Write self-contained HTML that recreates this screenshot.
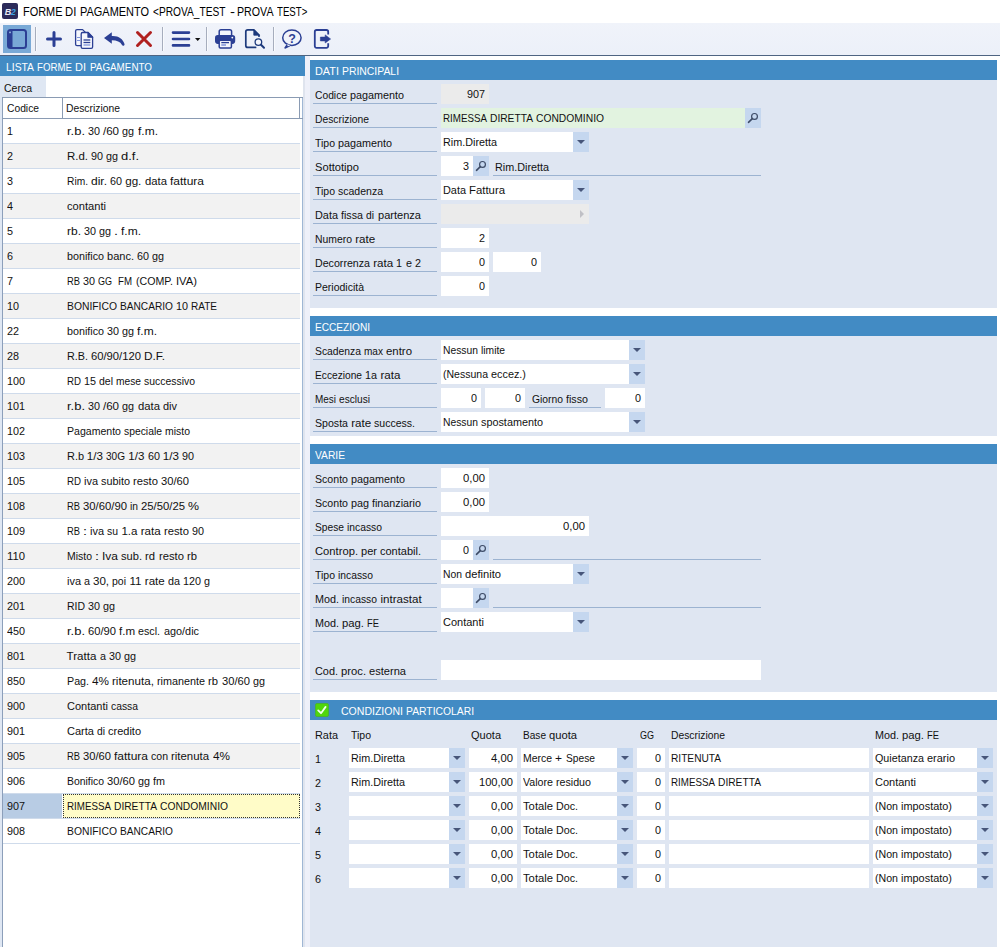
<!DOCTYPE html>
<html lang="it"><head><meta charset="utf-8"><title>FORME DI PAGAMENTO</title>
<style>
html,body{margin:0;padding:0}
body{width:1000px;height:947px;position:relative;overflow:hidden;background:#fff;font-family:"Liberation Sans",sans-serif;font-size:11.6px;color:#111}
.a{position:absolute;box-sizing:border-box;white-space:nowrap}
.t{font-size:11.6px;color:#111}
.w{display:inline-block;transform-origin:0 0;white-space:nowrap}
.ttl{color:#000}
.hd{height:20px;background:#428bc4;color:#fff;line-height:22px;font-size:11.6px}
.lbl{height:20px;line-height:21px;padding-left:2px;border-bottom:1px solid #9cb3d1}
.ul{height:20px;line-height:21px;padding-left:2px;border-bottom:1px solid #9cb3d1}
.inp{height:20px;line-height:19px;background:#fff}
.gray{background:#ebebeb}
.green{background:#e2f3e0}
.btn{width:16px;height:20px;background:#c5d7ef}
.arr{position:absolute;left:4px;top:8px;width:0;height:0;border-top:4px solid #47567a;border-left:4px solid transparent;border-right:4px solid transparent}
</style></head>
<body>
<div class="a" style="left:0;top:0;width:1000px;height:23px;background:#fff"></div>
<div class="a" style="left:2px;top:3px;width:16px;height:16px;background:#2c2b5a;border-radius:2px"></div>
<div class="a" style="left:3px;top:6px;width:14px;height:12px;font:italic bold 9px/12px 'Liberation Sans',sans-serif;color:#e8e8f4;letter-spacing:-0.5px;text-align:center">B<span style="color:#3aa0e0">2</span></div>
<div class="a ttl" style="left:23px;top:4px;width:300px;height:17px;line-height:17px;font-size:12.6px"><span class="a" style="left:0.3000000000000007px;top:0;transform-origin:0 0;transform:scaleX(0.868)">FORME </span><span class="a" style="left:42.3px;top:0;transform-origin:0 0;transform:scaleX(0.897)">DI </span><span class="a" style="left:56.5px;top:0;transform-origin:0 0;transform:scaleX(0.870)">PAGAMENTO </span><span class="a" style="left:130px;top:0;transform-origin:0 0;transform:scaleX(0.808)">&lt;PROVA_TEST </span><span class="a" style="left:206.6px;top:0;transform-origin:0 0;transform:scaleX(1.190)">- </span><span class="a" style="left:214.3px;top:0;transform-origin:0 0;transform:scaleX(0.846)">PROVA </span><span class="a" style="left:253.8px;top:0;transform-origin:0 0;transform:scaleX(0.766)">TEST&gt;</span></div>
<div class="a" style="left:0;top:23px;width:1000px;height:32px;background:linear-gradient(#f0f3fa,#ecf0f9)"></div>
<div class="a" style="left:0;top:55px;width:1000px;height:1px;background:#4e6482"></div>
<div class="a" style="left:3px;top:25px;width:28px;height:28px;background:#79a9d6"></div>
<svg class="a" style="left:0;top:23px" width="340" height="32" viewBox="0 23 340 32"><g fill="none" stroke="#2b3f94" stroke-linecap="round" stroke-linejoin="round">
<rect x="8" y="30" width="18" height="18" rx="2.5" stroke-width="2" fill="#79a9d6"/>
<path d="M8 32.5 a2.5 2.5 0 0 1 2.5 -2.5 H12.5 V48 H10.5 a2.5 2.5 0 0 1 -2.5 -2.5 Z" fill="#2b3f94" stroke="none"/>
<rect x="9.2" y="31.6" width="1.6" height="1.6" fill="#9fc0e4" stroke="none"/>
<path d="M54 32.5 V45.5 M47.5 39 H60.5" stroke-width="3"/>
<path d="M137.5 32.5 L150.5 45.5 M150.5 32.5 L137.5 45.5" stroke="#b0201f" stroke-width="3"/>
<path d="M173 32.6 H189 M173 39 H189 M173 45.4 H189" stroke-width="2.6"/>
</g>
<path d="M195 38 H200.4 L197.7 41 Z" fill="#111"/>
<g fill="#f4f6fc" stroke="#2b3f94" stroke-width="1.3" stroke-linejoin="round">
<path d="M84.8 45.6 H77 a1.4 1.4 0 0 1 -1.4 -1.4 V31 a1.4 1.4 0 0 1 1.4 -1.4 H82.6 L85.4 32.4 Z"/>
<path d="M81.2 33.9 a1.4 1.4 0 0 1 1.4 -1.4 H88 L92.6 37.2 V47 a1.4 1.4 0 0 1 -1.4 1.4 H82.6 a1.4 1.4 0 0 1 -1.4 -1.4 Z"/>
<path d="M88 32.5 V37.2 H92.6 Z" fill="#2b3f94"/>
</g>
<g stroke-width="1.3" fill="none">
<path d="M83.5 40 H90.3" stroke="#2b3f94"/><path d="M83.5 42.5 H90.3" stroke="#2b3f94"/><path d="M83.5 45 H90.3" stroke="#7f94dc"/>
<path d="M77 37.5 H80 M77 40.5 H80" stroke="#7f94dc" stroke-width="1.1"/>
</g>
<path d="M104 38 L111.8 32.2 V36 C118.5 35.6 122.8 38.8 124.5 44 a1.35 1.35 0 0 1 -2.5 1 C120.3 41.8 117 40.3 111.8 40.3 V43.8 Z" fill="#2b3f94"/>
<g>
<rect x="219.2" y="29.8" width="12.4" height="8" rx="1.8" fill="#f4f6fc" stroke="#2b3f94" stroke-width="1.5"/>
<rect x="215" y="34.9" width="20.2" height="9" rx="2.8" fill="#2b3f94"/>
<rect x="219.2" y="40.2" width="12.2" height="7.8" rx="1.2" fill="#f4f6fc" stroke="#2b3f94" stroke-width="1.5"/>
<path d="M221.3 42.6 H229" stroke="#2b3f94" stroke-width="1.3"/><path d="M221.3 45 H226" stroke="#6f84d4" stroke-width="1.3"/>
<circle cx="232.3" cy="37.6" r="0.9" fill="#fff"/>
</g>
<g fill="none" stroke="#1d3a7c" stroke-linecap="round" stroke-linejoin="round">
<path d="M259 36.2 V35 L253.8 29.8 H247.8 a2 2 0 0 0 -2 2 V45.4 a2 2 0 0 0 2 2 H255.6" stroke-width="1.7"/>
<path d="M253.8 30 V35.2 H259 Z" fill="#1d3a7c" stroke-width="0.8"/>
<circle cx="258.4" cy="42.1" r="3.3" stroke-width="1.3" fill="#f4f6fc"/>
<path d="M261 44.8 L264 47.8" stroke-width="2"/>
</g>
<g fill="none" stroke="#2b3f94" stroke-linejoin="round">
<path d="M287.2 44.6 L285 48 L290 45.6" stroke-width="1.4" fill="#f0f3fa"/>
<ellipse cx="291.9" cy="37.7" rx="9.2" ry="7.7" stroke-width="1.5" fill="#f0f3fa"/>
<path d="M286.6 44.2 L288.6 46.2 L290.2 45 Z" fill="#f0f3fa" stroke="none"/>
</g>
<text x="292" y="42.6" text-anchor="middle" font-family="Liberation Sans, sans-serif" font-weight="bold" font-size="12.5" fill="#2b3f94">?</text>
<g fill="none" stroke="#2b3f94" stroke-linecap="butt" stroke-linejoin="round">
<path d="M328.2 34.6 V31.8 a1.8 1.8 0 0 0 -1.8 -1.8 H316.6 a1.8 1.8 0 0 0 -1.8 1.8 V46 a1.8 1.8 0 0 0 1.8 1.8 H326.4 a1.8 1.8 0 0 0 1.8 -1.8 V43.2" stroke-width="1.8"/>
<path d="M320.4 37.1 H325.2 V34.9 L330.6 39 L325.2 43 V40.9 H320.4 Z" fill="#2b3f94" stroke-width="0.6"/>
</g>
<g>
<rect x="35" y="27" width="1" height="24" fill="#a6adbd"/><rect x="36" y="27" width="1" height="24" fill="#f8fafd"/>
<rect x="162" y="27" width="1" height="24" fill="#a6adbd"/><rect x="163" y="27" width="1" height="24" fill="#f8fafd"/>
<rect x="206" y="27" width="1" height="24" fill="#a6adbd"/><rect x="207" y="27" width="1" height="24" fill="#f8fafd"/>
<rect x="273" y="27" width="1" height="24" fill="#a6adbd"/><rect x="274" y="27" width="1" height="24" fill="#f8fafd"/>
</g>
</svg>
<div class="a" style="left:0;top:56px;width:310px;height:891px;background:#eef0f9"></div>
<div class="a" style="left:0;top:56px;width:305px;height:891px;background:#fff"></div>
<div class="a" style="left:303px;top:76px;width:2px;height:871px;background:#dfe4ee"></div>
<div class="a hd" style="left:0px;top:56px;width:305px;padding-left:6px"><span class="w" style="width:28px;transform:scaleX(0.893)">LISTA</span> <span class="w" style="width:35px;transform:scaleX(0.836)">FORME</span> <span class="w" style="width:11px;transform:scaleX(0.949)">DI</span> <span class="w" style="width:62px;transform:scaleX(0.849)">PAGAMENTO</span></div>
<div class="a" style="left:0;top:76px;width:46px;height:21px;background:#dfe7f3"></div>
<div class="a t" style="left:4.4px;top:78px;line-height:20px;white-space:pre"><span class="w" style="width:28px;transform:scaleX(0.905)">Cerca</span></div>
<div class="a" style="left:0;top:76px;width:2px;height:871px;background:#dfe7f3"></div>
<div class="a" style="left:2px;top:97px;width:1px;height:850px;background:#8c9fba"></div>
<div class="a" style="left:302px;top:97px;width:1px;height:850px;background:#9fb6d4"></div>
<div class="a" style="left:2px;top:97px;width:301px;height:1px;background:#8a9bb3"></div>
<div class="a" style="left:2px;top:118px;width:301px;height:1px;background:#8a9bb3"></div>
<div class="a" style="left:62px;top:98px;width:1px;height:20px;background:#8a9bb3"></div>
<div class="a" style="left:299px;top:98px;width:1px;height:20px;background:#8a9bb3"></div>
<div class="a t" style="left:7px;top:98px;line-height:20px;white-space:pre"><span class="w" style="width:32px;transform:scaleX(0.887)">Codice</span></div>
<div class="a t" style="left:66px;top:98px;line-height:20px;white-space:pre"><span class="w" style="width:54px;transform:scaleX(0.891)">Descrizione</span></div>
<div class="a" style="left:3px;top:119px;width:297px;height:24px;background:#fff"></div>
<div class="a" style="left:3px;top:143px;width:297px;height:1px;background:#cfdbeb"></div>
<div class="a t" style="left:7px;top:119px;line-height:24px;white-space:pre"><span class="w" style="width:6px;transform:scaleX(0.930)">1</span></div>
<div class="a t" style="left:66.5px;top:119px;line-height:24px;white-space:pre"><span class="w" style="width:18px;transform:scaleX(1.116)">r.b.</span> <span class="w" style="width:12px;transform:scaleX(0.930)">30</span> /60 <span class="w" style="width:12px;transform:scaleX(0.930)">gg</span> <span class="w" style="width:20px;transform:scaleX(1.035)">f.m.</span></div>
<div class="a" style="left:3px;top:144px;width:297px;height:24px;background:#f2f2f2"></div>
<div class="a" style="left:3px;top:168px;width:297px;height:1px;background:#cfdbeb"></div>
<div class="a t" style="left:7px;top:144px;line-height:24px;white-space:pre"><span class="w" style="width:6px;transform:scaleX(0.930)">2</span></div>
<div class="a t" style="left:66.5px;top:144px;line-height:24px;white-space:pre"><span class="w" style="width:21px;transform:scaleX(0.988)">R.d.</span> <span class="w" style="width:12px;transform:scaleX(0.930)">90</span> <span class="w" style="width:12px;transform:scaleX(0.930)">gg</span> <span class="w" style="width:18px;transform:scaleX(1.116)">d.f.</span></div>
<div class="a" style="left:3px;top:169px;width:297px;height:24px;background:#fff"></div>
<div class="a" style="left:3px;top:193px;width:297px;height:1px;background:#cfdbeb"></div>
<div class="a t" style="left:7px;top:169px;line-height:24px;white-space:pre"><span class="w" style="width:6px;transform:scaleX(0.930)">3</span></div>
<div class="a t" style="left:66.5px;top:169px;line-height:24px;white-space:pre"><span class="w" style="width:21px;transform:scaleX(0.881)">Rim.</span> <span class="w" style="width:16px;transform:scaleX(1.034)">dir.</span> <span class="w" style="width:12px;transform:scaleX(0.930)">60</span> gg. <span class="w" style="width:22px;transform:scaleX(0.974)">data</span> <span class="w" style="width:34px;transform:scaleX(1.034)">fattura</span></div>
<div class="a" style="left:3px;top:194px;width:297px;height:24px;background:#f2f2f2"></div>
<div class="a" style="left:3px;top:218px;width:297px;height:1px;background:#cfdbeb"></div>
<div class="a t" style="left:7px;top:194px;line-height:24px;white-space:pre"><span class="w" style="width:6px;transform:scaleX(0.930)">4</span></div>
<div class="a t" style="left:66.5px;top:194px;line-height:24px;white-space:pre"><span class="w" style="width:39px;transform:scaleX(0.960)">contanti</span></div>
<div class="a" style="left:3px;top:219px;width:297px;height:24px;background:#fff"></div>
<div class="a" style="left:3px;top:243px;width:297px;height:1px;background:#cfdbeb"></div>
<div class="a t" style="left:7px;top:219px;line-height:24px;white-space:pre"><span class="w" style="width:6px;transform:scaleX(0.930)">5</span></div>
<div class="a t" style="left:66.5px;top:219px;line-height:24px;white-space:pre"><span class="w" style="width:14px;transform:scaleX(1.035)">rb.</span> <span class="w" style="width:12px;transform:scaleX(0.930)">30</span> <span class="w" style="width:12px;transform:scaleX(0.930)">gg</span> <span class="w" style="width:4px;transform:scaleX(1.237)">.</span> <span class="w" style="width:20px;transform:scaleX(1.035)">f.m.</span></div>
<div class="a" style="left:3px;top:244px;width:297px;height:24px;background:#f2f2f2"></div>
<div class="a" style="left:3px;top:268px;width:297px;height:1px;background:#cfdbeb"></div>
<div class="a t" style="left:7px;top:244px;line-height:24px;white-space:pre"><span class="w" style="width:6px;transform:scaleX(0.930)">6</span></div>
<div class="a t" style="left:66.5px;top:244px;line-height:24px;white-space:pre"><span class="w" style="width:37px;transform:scaleX(0.926)">bonifico</span> <span class="w" style="width:27px;transform:scaleX(0.952)">banc.</span> <span class="w" style="width:12px;transform:scaleX(0.930)">60</span> <span class="w" style="width:12px;transform:scaleX(0.930)">gg</span></div>
<div class="a" style="left:3px;top:269px;width:297px;height:24px;background:#fff"></div>
<div class="a" style="left:3px;top:293px;width:297px;height:1px;background:#cfdbeb"></div>
<div class="a t" style="left:7px;top:269px;line-height:24px;white-space:pre"><span class="w" style="width:6px;transform:scaleX(0.930)">7</span></div>
<div class="a t" style="left:66.5px;top:269px;line-height:24px;white-space:pre"><span class="w" style="width:13px;transform:scaleX(0.807)">RB</span> <span class="w" style="width:12px;transform:scaleX(0.930)">30</span> <span class="w" style="width:14px;transform:scaleX(0.776)">GG</span>  <span class="w" style="width:14px;transform:scaleX(0.836)">FM</span> <span class="w" style="width:37px;transform:scaleX(0.916)">(COMP.</span> <span class="w" style="width:21px;transform:scaleX(0.968)">IVA)</span></div>
<div class="a" style="left:3px;top:294px;width:297px;height:24px;background:#f2f2f2"></div>
<div class="a" style="left:3px;top:318px;width:297px;height:1px;background:#cfdbeb"></div>
<div class="a t" style="left:7px;top:294px;line-height:24px;white-space:pre"><span class="w" style="width:12px;transform:scaleX(0.930)">10</span></div>
<div class="a t" style="left:66.5px;top:294px;line-height:24px;white-space:pre"><span class="w" style="width:50px;transform:scaleX(0.892)">BONIFICO</span> <span class="w" style="width:53px;transform:scaleX(0.875)">BANCARIO</span> <span class="w" style="width:12px;transform:scaleX(0.930)">10</span> <span class="w" style="width:26px;transform:scaleX(0.865)">RATE</span></div>
<div class="a" style="left:3px;top:319px;width:297px;height:24px;background:#fff"></div>
<div class="a" style="left:3px;top:343px;width:297px;height:1px;background:#cfdbeb"></div>
<div class="a t" style="left:7px;top:319px;line-height:24px;white-space:pre"><span class="w" style="width:12px;transform:scaleX(0.930)">22</span></div>
<div class="a t" style="left:66.5px;top:319px;line-height:24px;white-space:pre"><span class="w" style="width:37px;transform:scaleX(0.926)">bonifico</span> <span class="w" style="width:12px;transform:scaleX(0.930)">30</span> <span class="w" style="width:12px;transform:scaleX(0.930)">gg</span> <span class="w" style="width:20px;transform:scaleX(1.035)">f.m.</span></div>
<div class="a" style="left:3px;top:344px;width:297px;height:24px;background:#f2f2f2"></div>
<div class="a" style="left:3px;top:368px;width:297px;height:1px;background:#cfdbeb"></div>
<div class="a t" style="left:7px;top:344px;line-height:24px;white-space:pre"><span class="w" style="width:12px;transform:scaleX(0.930)">28</span></div>
<div class="a t" style="left:66.5px;top:344px;line-height:24px;white-space:pre"><span class="w" style="width:21px;transform:scaleX(0.931)">R.B.</span> <span class="w" style="width:50px;transform:scaleX(0.969)">60/90/120</span> <span class="w" style="width:21px;transform:scaleX(1.018)">D.F.</span></div>
<div class="a" style="left:3px;top:369px;width:297px;height:24px;background:#fff"></div>
<div class="a" style="left:3px;top:393px;width:297px;height:1px;background:#cfdbeb"></div>
<div class="a t" style="left:7px;top:369px;line-height:24px;white-space:pre"><span class="w" style="width:18px;transform:scaleX(0.931)">100</span></div>
<div class="a t" style="left:66.5px;top:369px;line-height:24px;white-space:pre"><span class="w" style="width:14px;transform:scaleX(0.836)">RD</span> <span class="w" style="width:12px;transform:scaleX(0.930)">15</span> <span class="w" style="width:14px;transform:scaleX(0.904)">del</span> <span class="w" style="width:25px;transform:scaleX(0.882)">mese</span> <span class="w" style="width:51px;transform:scaleX(0.899)">successivo</span></div>
<div class="a" style="left:3px;top:394px;width:297px;height:24px;background:#f2f2f2"></div>
<div class="a" style="left:3px;top:418px;width:297px;height:1px;background:#cfdbeb"></div>
<div class="a t" style="left:7px;top:394px;line-height:24px;white-space:pre"><span class="w" style="width:18px;transform:scaleX(0.931)">101</span></div>
<div class="a t" style="left:66.5px;top:394px;line-height:24px;white-space:pre"><span class="w" style="width:18px;transform:scaleX(1.116)">r.b.</span> <span class="w" style="width:12px;transform:scaleX(0.930)">30</span> /60 <span class="w" style="width:12px;transform:scaleX(0.930)">gg</span> <span class="w" style="width:22px;transform:scaleX(0.974)">data</span> <span class="w" style="width:14px;transform:scaleX(0.944)">div</span></div>
<div class="a" style="left:3px;top:419px;width:297px;height:24px;background:#fff"></div>
<div class="a" style="left:3px;top:443px;width:297px;height:1px;background:#cfdbeb"></div>
<div class="a t" style="left:7px;top:419px;line-height:24px;white-space:pre"><span class="w" style="width:18px;transform:scaleX(0.931)">102</span></div>
<div class="a t" style="left:66.5px;top:419px;line-height:24px;white-space:pre"><span class="w" style="width:54px;transform:scaleX(0.910)">Pagamento</span> <span class="w" style="width:38px;transform:scaleX(0.893)">speciale</span> <span class="w" style="width:25px;transform:scaleX(0.902)">misto</span></div>
<div class="a" style="left:3px;top:444px;width:297px;height:24px;background:#f2f2f2"></div>
<div class="a" style="left:3px;top:468px;width:297px;height:1px;background:#cfdbeb"></div>
<div class="a t" style="left:7px;top:444px;line-height:24px;white-space:pre"><span class="w" style="width:18px;transform:scaleX(0.931)">103</span></div>
<div class="a t" style="left:66.5px;top:444px;line-height:24px;white-space:pre"><span class="w" style="width:17px;transform:scaleX(0.942)">R.b</span> 1/3 <span class="w" style="width:19px;transform:scaleX(0.867)">30G</span> 1/3 <span class="w" style="width:12px;transform:scaleX(0.930)">60</span> 1/3 <span class="w" style="width:12px;transform:scaleX(0.930)">90</span></div>
<div class="a" style="left:3px;top:469px;width:297px;height:24px;background:#fff"></div>
<div class="a" style="left:3px;top:493px;width:297px;height:1px;background:#cfdbeb"></div>
<div class="a t" style="left:7px;top:469px;line-height:24px;white-space:pre"><span class="w" style="width:18px;transform:scaleX(0.931)">105</span></div>
<div class="a t" style="left:66.5px;top:469px;line-height:24px;white-space:pre"><span class="w" style="width:14px;transform:scaleX(0.836)">RD</span> <span class="w" style="width:14px;transform:scaleX(0.944)">iva</span> <span class="w" style="width:29px;transform:scaleX(0.937)">subito</span> <span class="w" style="width:25px;transform:scaleX(0.970)">resto</span> <span class="w" style="width:28px;transform:scaleX(0.965)">30/60</span></div>
<div class="a" style="left:3px;top:494px;width:297px;height:24px;background:#f2f2f2"></div>
<div class="a" style="left:3px;top:518px;width:297px;height:1px;background:#cfdbeb"></div>
<div class="a t" style="left:7px;top:494px;line-height:24px;white-space:pre"><span class="w" style="width:18px;transform:scaleX(0.931)">108</span></div>
<div class="a t" style="left:66.5px;top:494px;line-height:24px;white-space:pre"><span class="w" style="width:13px;transform:scaleX(0.807)">RB</span> <span class="w" style="width:44px;transform:scaleX(0.975)">30/60/90</span> <span class="w" style="width:8px;transform:scaleX(0.886)">in</span> <span class="w" style="width:44px;transform:scaleX(0.975)">25/50/25</span> <span class="w" style="width:11px;transform:scaleX(1.067)">%</span></div>
<div class="a" style="left:3px;top:519px;width:297px;height:24px;background:#fff"></div>
<div class="a" style="left:3px;top:543px;width:297px;height:1px;background:#cfdbeb"></div>
<div class="a t" style="left:7px;top:519px;line-height:24px;white-space:pre"><span class="w" style="width:18px;transform:scaleX(0.931)">109</span></div>
<div class="a t" style="left:66.5px;top:519px;line-height:24px;white-space:pre"><span class="w" style="width:13px;transform:scaleX(0.807)">RB</span> <span class="w" style="width:4px;transform:scaleX(1.237)">:</span> <span class="w" style="width:14px;transform:scaleX(0.944)">iva</span> <span class="w" style="width:11px;transform:scaleX(0.898)">su</span> 1.a rata <span class="w" style="width:25px;transform:scaleX(0.970)">resto</span> <span class="w" style="width:12px;transform:scaleX(0.930)">90</span></div>
<div class="a" style="left:3px;top:544px;width:297px;height:24px;background:#f2f2f2"></div>
<div class="a" style="left:3px;top:568px;width:297px;height:1px;background:#cfdbeb"></div>
<div class="a t" style="left:7px;top:544px;line-height:24px;white-space:pre"><span class="w" style="width:18px;transform:scaleX(0.974)">110</span></div>
<div class="a t" style="left:66.5px;top:544px;line-height:24px;white-space:pre"><span class="w" style="width:25px;transform:scaleX(0.902)">Misto</span> <span class="w" style="width:4px;transform:scaleX(1.237)">:</span> <span class="w" style="width:16px;transform:scaleX(1.034)">Iva</span> <span class="w" style="width:21px;transform:scaleX(0.958)">sub.</span> <span class="w" style="width:10px;transform:scaleX(0.970)">rd</span> <span class="w" style="width:25px;transform:scaleX(0.970)">resto</span> <span class="w" style="width:10px;transform:scaleX(0.970)">rb</span></div>
<div class="a" style="left:3px;top:569px;width:297px;height:24px;background:#fff"></div>
<div class="a" style="left:3px;top:593px;width:297px;height:1px;background:#cfdbeb"></div>
<div class="a t" style="left:7px;top:569px;line-height:24px;white-space:pre"><span class="w" style="width:18px;transform:scaleX(0.931)">200</span></div>
<div class="a t" style="left:66.5px;top:569px;line-height:24px;white-space:pre"><span class="w" style="width:14px;transform:scaleX(0.944)">iva</span> <span class="w" style="width:6px;transform:scaleX(0.930)">a</span> 30, <span class="w" style="width:14px;transform:scaleX(0.904)">poi</span> 11 rate <span class="w" style="width:12px;transform:scaleX(0.930)">da</span> <span class="w" style="width:18px;transform:scaleX(0.931)">120</span> <span class="w" style="width:6px;transform:scaleX(0.930)">g</span></div>
<div class="a" style="left:3px;top:594px;width:297px;height:24px;background:#f2f2f2"></div>
<div class="a" style="left:3px;top:618px;width:297px;height:1px;background:#cfdbeb"></div>
<div class="a t" style="left:7px;top:594px;line-height:24px;white-space:pre"><span class="w" style="width:18px;transform:scaleX(0.931)">201</span></div>
<div class="a t" style="left:66.5px;top:594px;line-height:24px;white-space:pre"><span class="w" style="width:18px;transform:scaleX(0.901)">RID</span> <span class="w" style="width:12px;transform:scaleX(0.930)">30</span> <span class="w" style="width:12px;transform:scaleX(0.930)">gg</span></div>
<div class="a" style="left:3px;top:619px;width:297px;height:24px;background:#fff"></div>
<div class="a" style="left:3px;top:643px;width:297px;height:1px;background:#cfdbeb"></div>
<div class="a t" style="left:7px;top:619px;line-height:24px;white-space:pre"><span class="w" style="width:18px;transform:scaleX(0.931)">450</span></div>
<div class="a t" style="left:66.5px;top:619px;line-height:24px;white-space:pre"><span class="w" style="width:18px;transform:scaleX(1.116)">r.b.</span> <span class="w" style="width:28px;transform:scaleX(0.965)">60/90</span> f.m <span class="w" style="width:22px;transform:scaleX(0.923)">escl.</span> <span class="w" style="width:35px;transform:scaleX(0.936)">ago/dic</span></div>
<div class="a" style="left:3px;top:644px;width:297px;height:24px;background:#f2f2f2"></div>
<div class="a" style="left:3px;top:668px;width:297px;height:1px;background:#cfdbeb"></div>
<div class="a t" style="left:7px;top:644px;line-height:24px;white-space:pre"><span class="w" style="width:18px;transform:scaleX(0.931)">801</span></div>
<div class="a t" style="left:66.5px;top:644px;line-height:24px;white-space:pre">Tratta <span class="w" style="width:6px;transform:scaleX(0.930)">a</span> <span class="w" style="width:12px;transform:scaleX(0.930)">30</span> <span class="w" style="width:12px;transform:scaleX(0.930)">gg</span></div>
<div class="a" style="left:3px;top:669px;width:297px;height:24px;background:#fff"></div>
<div class="a" style="left:3px;top:693px;width:297px;height:1px;background:#cfdbeb"></div>
<div class="a t" style="left:7px;top:669px;line-height:24px;white-space:pre"><span class="w" style="width:18px;transform:scaleX(0.931)">850</span></div>
<div class="a t" style="left:66.5px;top:669px;line-height:24px;white-space:pre"><span class="w" style="width:22px;transform:scaleX(0.922)">Pag.</span> <span class="w" style="width:17px;transform:scaleX(1.014)">4%</span> ritenuta, <span class="w" style="width:48px;transform:scaleX(0.931)">rimanente</span> <span class="w" style="width:10px;transform:scaleX(0.970)">rb</span> <span class="w" style="width:28px;transform:scaleX(0.965)">30/60</span> <span class="w" style="width:12px;transform:scaleX(0.930)">gg</span></div>
<div class="a" style="left:3px;top:694px;width:297px;height:24px;background:#f2f2f2"></div>
<div class="a" style="left:3px;top:718px;width:297px;height:1px;background:#cfdbeb"></div>
<div class="a t" style="left:7px;top:694px;line-height:24px;white-space:pre"><span class="w" style="width:18px;transform:scaleX(0.931)">900</span></div>
<div class="a t" style="left:66.5px;top:694px;line-height:24px;white-space:pre"><span class="w" style="width:41px;transform:scaleX(0.949)">Contanti</span> <span class="w" style="width:27px;transform:scaleX(0.891)">cassa</span></div>
<div class="a" style="left:3px;top:719px;width:297px;height:24px;background:#fff"></div>
<div class="a" style="left:3px;top:743px;width:297px;height:1px;background:#cfdbeb"></div>
<div class="a t" style="left:7px;top:719px;line-height:24px;white-space:pre"><span class="w" style="width:18px;transform:scaleX(0.931)">901</span></div>
<div class="a t" style="left:66.5px;top:719px;line-height:24px;white-space:pre"><span class="w" style="width:27px;transform:scaleX(0.952)">Carta</span> <span class="w" style="width:8px;transform:scaleX(0.886)">di</span> <span class="w" style="width:33px;transform:scaleX(0.948)">credito</span></div>
<div class="a" style="left:3px;top:744px;width:297px;height:24px;background:#f2f2f2"></div>
<div class="a" style="left:3px;top:768px;width:297px;height:1px;background:#cfdbeb"></div>
<div class="a t" style="left:7px;top:744px;line-height:24px;white-space:pre"><span class="w" style="width:18px;transform:scaleX(0.931)">905</span></div>
<div class="a t" style="left:66.5px;top:744px;line-height:24px;white-space:pre"><span class="w" style="width:13px;transform:scaleX(0.807)">RB</span> <span class="w" style="width:28px;transform:scaleX(0.965)">30/60</span> <span class="w" style="width:34px;transform:scaleX(1.034)">fattura</span> <span class="w" style="width:17px;transform:scaleX(0.909)">con</span> <span class="w" style="width:38px;transform:scaleX(0.983)">ritenuta</span> <span class="w" style="width:17px;transform:scaleX(1.014)">4%</span></div>
<div class="a" style="left:3px;top:769px;width:297px;height:24px;background:#fff"></div>
<div class="a" style="left:3px;top:793px;width:297px;height:1px;background:#cfdbeb"></div>
<div class="a t" style="left:7px;top:769px;line-height:24px;white-space:pre"><span class="w" style="width:18px;transform:scaleX(0.931)">906</span></div>
<div class="a t" style="left:66.5px;top:769px;line-height:24px;white-space:pre"><span class="w" style="width:37px;transform:scaleX(0.897)">Bonifico</span> <span class="w" style="width:28px;transform:scaleX(0.965)">30/60</span> <span class="w" style="width:12px;transform:scaleX(0.930)">gg</span> <span class="w" style="width:12px;transform:scaleX(0.931)">fm</span></div>
<div class="a" style="left:3px;top:794px;width:59px;height:24px;background:#b8cce4"></div>
<div class="a" style="left:63px;top:794px;width:237px;height:24px;background:#fffcc8;border:1px dotted #333"></div>
<div class="a" style="left:3px;top:818px;width:297px;height:1px;background:#cfdbeb"></div>
<div class="a t" style="left:7px;top:794px;line-height:24px;white-space:pre"><span class="w" style="width:18px;transform:scaleX(0.931)">907</span></div>
<div class="a t" style="left:66.5px;top:794px;line-height:24px;white-space:pre"><span class="w" style="width:44px;transform:scaleX(0.843)">RIMESSA</span> <span class="w" style="width:43px;transform:scaleX(0.882)">DIRETTA</span> <span class="w" style="width:68px;transform:scaleX(0.887)">CONDOMINIO</span></div>
<div class="a" style="left:3px;top:819px;width:297px;height:24px;background:#fff"></div>
<div class="a" style="left:3px;top:843px;width:297px;height:1px;background:#cfdbeb"></div>
<div class="a t" style="left:7px;top:819px;line-height:24px;white-space:pre"><span class="w" style="width:18px;transform:scaleX(0.931)">908</span></div>
<div class="a t" style="left:66.5px;top:819px;line-height:24px;white-space:pre"><span class="w" style="width:50px;transform:scaleX(0.892)">BONIFICO</span> <span class="w" style="width:53px;transform:scaleX(0.875)">BANCARIO</span></div>
<div class="a" style="left:310px;top:56px;width:690px;height:891px;background:#fff"></div>
<div class="a hd" style="left:310px;top:60px;width:687px;padding-left:5px"><span class="w" style="width:24px;transform:scaleX(0.939)">DATI</span> <span class="w" style="width:57px;transform:scaleX(0.897)">PRINCIPALI</span></div>
<div class="a" style="left:310px;top:80px;width:687px;height:228px;background:#dfe6f2"></div>
<div class="a hd" style="left:310px;top:316px;width:687px;padding-left:5px"><span class="w" style="width:55px;transform:scaleX(0.871)">ECCEZIONI</span></div>
<div class="a" style="left:310px;top:336px;width:687px;height:100px;background:#dfe6f2"></div>
<div class="a hd" style="left:310px;top:444px;width:687px;padding-left:5px"><span class="w" style="width:30px;transform:scaleX(0.884)">VARIE</span></div>
<div class="a" style="left:310px;top:464px;width:687px;height:228px;background:#dfe6f2"></div>
<div class="a hd" style="left:310px;top:700px;width:687px;padding-left:31px"><span class="w" style="width:62px;transform:scaleX(0.908)">CONDIZIONI</span> <span class="w" style="width:68px;transform:scaleX(0.892)">PARTICOLARI</span></div>
<div class="a" style="left:310px;top:720px;width:687px;height:227px;background:#dfe6f2"></div>
<div class="a" style="left:315px;top:703px;width:14px;height:14px;background:#50d60c;border:1px solid #47b238;border-radius:2px"></div>
<svg class="a" style="left:315px;top:703px" width="14" height="14" viewBox="0 0 14 14"><path d="M3.2 7.4 L6 10.2 L10.6 3.9" fill="none" stroke="#efffec" stroke-width="1.8" stroke-linecap="round" stroke-linejoin="round"/></svg>
<div class="a lbl" style="left:313px;top:84px;width:124px;padding-left:2px"><span class="w" style="width:32px;transform:scaleX(0.887)">Codice</span> <span class="w" style="width:54px;transform:scaleX(0.931)">pagamento</span></div>
<div class="a lbl" style="left:313px;top:108px;width:124px;padding-left:2px"><span class="w" style="width:54px;transform:scaleX(0.891)">Descrizione</span></div>
<div class="a lbl" style="left:313px;top:132px;width:124px;padding-left:2px"><span class="w" style="width:20px;transform:scaleX(0.904)">Tipo</span> <span class="w" style="width:54px;transform:scaleX(0.931)">pagamento</span></div>
<div class="a lbl" style="left:313px;top:156px;width:124px;padding-left:2px"><span class="w" style="width:44px;transform:scaleX(0.961)">Sottotipo</span></div>
<div class="a lbl" style="left:313px;top:180px;width:124px;padding-left:2px"><span class="w" style="width:20px;transform:scaleX(0.904)">Tipo</span> <span class="w" style="width:45px;transform:scaleX(0.907)">scadenza</span></div>
<div class="a lbl" style="left:313px;top:204px;width:124px;padding-left:2px"><span class="w" style="width:23px;transform:scaleX(0.939)">Data</span> <span class="w" style="width:22px;transform:scaleX(0.923)">fissa</span> <span class="w" style="width:8px;transform:scaleX(0.886)">di</span> <span class="w" style="width:43px;transform:scaleX(0.953)">partenza</span></div>
<div class="a lbl" style="left:313px;top:228px;width:124px;padding-left:2px"><span class="w" style="width:37px;transform:scaleX(0.897)">Numero</span> rate</div>
<div class="a lbl" style="left:313px;top:252px;width:124px;padding-left:2px"><span class="w" style="width:55px;transform:scaleX(0.918)">Decorrenza</span> rata <span class="w" style="width:6px;transform:scaleX(0.930)">1</span> <span class="w" style="width:6px;transform:scaleX(0.930)">e</span> <span class="w" style="width:6px;transform:scaleX(0.930)">2</span></div>
<div class="a lbl" style="left:313px;top:276px;width:124px;padding-left:2px"><span class="w" style="width:49px;transform:scaleX(0.905)">Periodicità</span></div>
<div class="a inp gray" style="left:441px;top:84px;width:48px;text-align:right;padding-right:3.7px"><span class="w" style="width:18px;transform:scaleX(0.931)">907</span></div>
<div class="a inp green" style="left:441px;top:108px;width:304px;text-align:left;padding-left:2px"><span class="w" style="width:44px;transform:scaleX(0.843)">RIMESSA</span> <span class="w" style="width:43px;transform:scaleX(0.882)">DIRETTA</span> <span class="w" style="width:68px;transform:scaleX(0.887)">CONDOMINIO</span></div>
<div class="a btn" style="left:745px;top:108px"><svg width="16" height="20" viewBox="0 0 16 20"><circle cx="9.5" cy="8.4" r="2.9" fill="none" stroke="#3d4b66" stroke-width="1.2"/><path d="M7.3 10.7 L3.5 14.3" stroke="#3d4b66" stroke-width="1.6" stroke-linecap="round"/></svg></div>
<div class="a inp" style="left:441px;top:132px;width:132px;padding-left:2.2px"><span class="w" style="width:54px;transform:scaleX(0.931)">Rim.Diretta</span></div>
<div class="a btn" style="left:573px;top:132px"><i class="arr"></i></div>
<div class="a inp " style="left:441px;top:156px;width:32px;text-align:right;padding-right:3.7px"><span class="w" style="width:6px;transform:scaleX(0.930)">3</span></div>
<div class="a btn" style="left:473px;top:156px"><svg width="16" height="20" viewBox="0 0 16 20"><circle cx="9.5" cy="8.4" r="2.9" fill="none" stroke="#3d4b66" stroke-width="1.2"/><path d="M7.3 10.7 L3.5 14.3" stroke="#3d4b66" stroke-width="1.6" stroke-linecap="round"/></svg></div>
<div class="a ul" style="left:493px;top:156px;width:268px"><span class="w" style="width:54px;transform:scaleX(0.931)">Rim.Diretta</span></div>
<div class="a inp" style="left:441px;top:180px;width:132px;padding-left:2.2px"><span class="w" style="width:23px;transform:scaleX(0.939)">Data</span> <span class="w" style="width:36px;transform:scaleX(0.980)">Fattura</span></div>
<div class="a btn" style="left:573px;top:180px"><i class="arr"></i></div>
<div class="a inp gray" style="left:441px;top:204px;width:148px"></div>
<div class="a" style="left:580px;top:210px;width:0;height:0;border-left:4px solid #c0c0c5;border-top:4px solid transparent;border-bottom:4px solid transparent"></div>
<div class="a inp " style="left:441px;top:228px;width:48px;text-align:right;padding-right:3.7px"><span class="w" style="width:6px;transform:scaleX(0.930)">2</span></div>
<div class="a inp " style="left:441px;top:252px;width:48px;text-align:right;padding-right:3.7px"><span class="w" style="width:6px;transform:scaleX(0.930)">0</span></div>
<div class="a inp " style="left:493px;top:252px;width:48px;text-align:right;padding-right:3.7px"><span class="w" style="width:6px;transform:scaleX(0.930)">0</span></div>
<div class="a inp " style="left:441px;top:276px;width:48px;text-align:right;padding-right:3.7px"><span class="w" style="width:6px;transform:scaleX(0.930)">0</span></div>
<div class="a lbl" style="left:313px;top:340px;width:124px;padding-left:2px"><span class="w" style="width:46px;transform:scaleX(0.892)">Scadenza</span> <span class="w" style="width:19px;transform:scaleX(0.867)">max</span> <span class="w" style="width:26px;transform:scaleX(0.983)">entro</span></div>
<div class="a lbl" style="left:313px;top:364px;width:124px;padding-left:2px"><span class="w" style="width:47px;transform:scaleX(0.879)">Eccezione</span> <span class="w" style="width:12px;transform:scaleX(0.930)">1a</span> rata</div>
<div class="a lbl" style="left:313px;top:388px;width:124px;padding-left:2px"><span class="w" style="width:21px;transform:scaleX(0.858)">Mesi</span> <span class="w" style="width:31px;transform:scaleX(0.874)">esclusi</span></div>
<div class="a lbl" style="left:313px;top:412px;width:124px;padding-left:2px"><span class="w" style="width:33px;transform:scaleX(0.914)">Sposta</span> rate <span class="w" style="width:41px;transform:scaleX(0.909)">success.</span></div>
<div class="a inp" style="left:441px;top:340px;width:188px;padding-left:2.2px"><span class="w" style="width:35px;transform:scaleX(0.890)">Nessun</span> <span class="w" style="width:24px;transform:scaleX(0.887)">limite</span></div>
<div class="a btn" style="left:629px;top:340px"><i class="arr"></i></div>
<div class="a inp" style="left:441px;top:364px;width:188px;padding-left:2.2px"><span class="w" style="width:45px;transform:scaleX(0.907)">(Nessuna</span> <span class="w" style="width:35px;transform:scaleX(0.936)">eccez.)</span></div>
<div class="a btn" style="left:629px;top:364px"><i class="arr"></i></div>
<div class="a inp " style="left:441px;top:388px;width:40px;text-align:right;padding-right:3.7px"><span class="w" style="width:6px;transform:scaleX(0.930)">0</span></div>
<div class="a inp " style="left:485px;top:388px;width:40px;text-align:right;padding-right:3.7px"><span class="w" style="width:6px;transform:scaleX(0.930)">0</span></div>
<div class="a lbl" style="left:529px;top:388px;width:72px;padding-left:3px"><span class="w" style="width:31px;transform:scaleX(0.890)">Giorno</span> <span class="w" style="width:22px;transform:scaleX(0.923)">fisso</span></div>
<div class="a inp " style="left:605px;top:388px;width:40px;text-align:right;padding-right:3.7px"><span class="w" style="width:6px;transform:scaleX(0.930)">0</span></div>
<div class="a inp" style="left:441px;top:412px;width:188px;padding-left:2.2px"><span class="w" style="width:35px;transform:scaleX(0.890)">Nessun</span> <span class="w" style="width:62px;transform:scaleX(0.934)">spostamento</span></div>
<div class="a btn" style="left:629px;top:412px"><i class="arr"></i></div>
<div class="a lbl" style="left:313px;top:468px;width:124px;padding-left:2px"><span class="w" style="width:33px;transform:scaleX(0.914)">Sconto</span> <span class="w" style="width:54px;transform:scaleX(0.931)">pagamento</span></div>
<div class="a lbl" style="left:313px;top:492px;width:124px;padding-left:2px"><span class="w" style="width:33px;transform:scaleX(0.914)">Sconto</span> <span class="w" style="width:18px;transform:scaleX(0.931)">pag</span> <span class="w" style="width:49px;transform:scaleX(0.927)">finanziario</span></div>
<div class="a lbl" style="left:313px;top:516px;width:124px;padding-left:2px"><span class="w" style="width:29px;transform:scaleX(0.882)">Spese</span> <span class="w" style="width:35px;transform:scaleX(0.890)">incasso</span></div>
<div class="a lbl" style="left:313px;top:540px;width:124px;padding-left:2px"><span class="w" style="width:43px;transform:scaleX(0.967)">Controp.</span> <span class="w" style="width:16px;transform:scaleX(0.954)">per</span> <span class="w" style="width:41px;transform:scaleX(0.949)">contabil.</span></div>
<div class="a lbl" style="left:313px;top:564px;width:124px;padding-left:2px"><span class="w" style="width:20px;transform:scaleX(0.904)">Tipo</span> <span class="w" style="width:35px;transform:scaleX(0.890)">incasso</span></div>
<div class="a lbl" style="left:313px;top:588px;width:124px;padding-left:2px"><span class="w" style="width:24px;transform:scaleX(0.931)">Mod.</span> <span class="w" style="width:35px;transform:scaleX(0.890)">incasso</span> intrastat</div>
<div class="a lbl" style="left:313px;top:612px;width:124px;padding-left:2px"><span class="w" style="width:24px;transform:scaleX(0.931)">Mod.</span> <span class="w" style="width:22px;transform:scaleX(0.974)">pag.</span> <span class="w" style="width:12px;transform:scaleX(0.809)">FE</span></div>
<div class="a lbl" style="left:313px;top:660px;width:124px;padding-left:2px"><span class="w" style="width:23px;transform:scaleX(0.939)">Cod.</span> <span class="w" style="width:25px;transform:scaleX(0.970)">proc.</span> <span class="w" style="width:37px;transform:scaleX(0.957)">esterna</span></div>
<div class="a inp " style="left:441px;top:468px;width:48px;text-align:right;padding-right:3.7px"><span class="w" style="width:22px;transform:scaleX(0.974)">0,00</span></div>
<div class="a inp " style="left:441px;top:492px;width:48px;text-align:right;padding-right:3.7px"><span class="w" style="width:22px;transform:scaleX(0.974)">0,00</span></div>
<div class="a inp " style="left:441px;top:516px;width:148px;text-align:right;padding-right:3.7px"><span class="w" style="width:22px;transform:scaleX(0.974)">0,00</span></div>
<div class="a inp " style="left:441px;top:540px;width:32px;text-align:right;padding-right:3.7px"><span class="w" style="width:6px;transform:scaleX(0.930)">0</span></div>
<div class="a btn" style="left:473px;top:540px"><svg width="16" height="20" viewBox="0 0 16 20"><circle cx="9.5" cy="8.4" r="2.9" fill="none" stroke="#3d4b66" stroke-width="1.2"/><path d="M7.3 10.7 L3.5 14.3" stroke="#3d4b66" stroke-width="1.6" stroke-linecap="round"/></svg></div>
<div class="a ul" style="left:493px;top:540px;width:268px"></div>
<div class="a inp" style="left:441px;top:564px;width:132px;padding-left:2.2px"><span class="w" style="width:19px;transform:scaleX(0.893)">Non</span> <span class="w" style="width:36px;transform:scaleX(0.963)">definito</span></div>
<div class="a btn" style="left:573px;top:564px"><i class="arr"></i></div>
<div class="a inp " style="left:441px;top:588px;width:32px;text-align:right;padding-right:3.7px"></div>
<div class="a btn" style="left:473px;top:588px"><svg width="16" height="20" viewBox="0 0 16 20"><circle cx="9.5" cy="8.4" r="2.9" fill="none" stroke="#3d4b66" stroke-width="1.2"/><path d="M7.3 10.7 L3.5 14.3" stroke="#3d4b66" stroke-width="1.6" stroke-linecap="round"/></svg></div>
<div class="a ul" style="left:493px;top:588px;width:268px"></div>
<div class="a inp" style="left:441px;top:612px;width:132px;padding-left:2.2px"><span class="w" style="width:41px;transform:scaleX(0.949)">Contanti</span></div>
<div class="a btn" style="left:573px;top:612px"><i class="arr"></i></div>
<div class="a inp " style="left:441px;top:660px;width:320px;text-align:right;padding-right:3.7px"></div>
<div class="a t" style="left:315px;top:725px;line-height:20px;white-space:pre"><span class="w" style="width:23px;transform:scaleX(0.939)">Rata</span></div>
<div class="a t" style="left:351px;top:725px;line-height:20px;white-space:pre"><span class="w" style="width:20px;transform:scaleX(0.904)">Tipo</span></div>
<div class="a t" style="left:471px;top:725px;line-height:20px;white-space:pre"><span class="w" style="width:30px;transform:scaleX(0.950)">Quota</span></div>
<div class="a t" style="left:523px;top:725px;line-height:20px;white-space:pre"><span class="w" style="width:23px;transform:scaleX(0.870)">Base</span> <span class="w" style="width:28px;transform:scaleX(0.965)">quota</span></div>
<div class="a t" style="left:640px;top:725px;line-height:20px;white-space:pre"><span class="w" style="width:14px;transform:scaleX(0.776)">GG</span></div>
<div class="a t" style="left:671px;top:725px;line-height:20px;white-space:pre"><span class="w" style="width:54px;transform:scaleX(0.891)">Descrizione</span></div>
<div class="a t" style="left:875px;top:725px;line-height:20px;white-space:pre"><span class="w" style="width:24px;transform:scaleX(0.931)">Mod.</span> <span class="w" style="width:22px;transform:scaleX(0.974)">pag.</span> <span class="w" style="width:12px;transform:scaleX(0.809)">FE</span></div>
<div class="a t" style="left:315px;top:749px;line-height:20px;white-space:pre"><span class="w" style="width:6px;transform:scaleX(0.930)">1</span></div>
<div class="a inp" style="left:349px;top:748px;width:100px;padding-left:2.2px"><span class="w" style="width:54px;transform:scaleX(0.931)">Rim.Diretta</span></div>
<div class="a btn" style="left:449px;top:748px"><i class="arr"></i></div>
<div class="a inp " style="left:469px;top:748px;width:48px;text-align:right;padding-right:3.7px"><span class="w" style="width:22px;transform:scaleX(0.974)">4,00</span></div>
<div class="a inp" style="left:521px;top:748px;width:96px;padding-left:2.2px"><span class="w" style="width:29px;transform:scaleX(0.900)">Merce</span> <span class="w" style="width:7px;transform:scaleX(1.032)">+</span> <span class="w" style="width:29px;transform:scaleX(0.882)">Spese</span></div>
<div class="a btn" style="left:617px;top:748px"><i class="arr"></i></div>
<div class="a inp " style="left:637px;top:748px;width:28px;text-align:right;padding-right:3.7px"><span class="w" style="width:6px;transform:scaleX(0.930)">0</span></div>
<div class="a inp " style="left:669px;top:748px;width:200px;text-align:left;padding-left:2px"><span class="w" style="width:50px;transform:scaleX(0.876)">RITENUTA</span></div>
<div class="a inp" style="left:873px;top:748px;width:104px;padding-left:2.2px"><span class="w" style="width:49px;transform:scaleX(0.927)">Quietanza</span> <span class="w" style="width:28px;transform:scaleX(0.944)">erario</span></div>
<div class="a btn" style="left:977px;top:748px"><i class="arr"></i></div>
<div class="a t" style="left:315px;top:773px;line-height:20px;white-space:pre"><span class="w" style="width:6px;transform:scaleX(0.930)">2</span></div>
<div class="a inp" style="left:349px;top:772px;width:100px;padding-left:2.2px"><span class="w" style="width:54px;transform:scaleX(0.931)">Rim.Diretta</span></div>
<div class="a btn" style="left:449px;top:772px"><i class="arr"></i></div>
<div class="a inp " style="left:469px;top:772px;width:48px;text-align:right;padding-right:3.7px"><span class="w" style="width:34px;transform:scaleX(0.959)">100,00</span></div>
<div class="a inp" style="left:521px;top:772px;width:96px;padding-left:2.2px"><span class="w" style="width:30px;transform:scaleX(0.919)">Valore</span> <span class="w" style="width:35px;transform:scaleX(0.920)">residuo</span></div>
<div class="a btn" style="left:617px;top:772px"><i class="arr"></i></div>
<div class="a inp " style="left:637px;top:772px;width:28px;text-align:right;padding-right:3.7px"><span class="w" style="width:6px;transform:scaleX(0.930)">0</span></div>
<div class="a inp " style="left:669px;top:772px;width:200px;text-align:left;padding-left:2px"><span class="w" style="width:44px;transform:scaleX(0.843)">RIMESSA</span> <span class="w" style="width:43px;transform:scaleX(0.882)">DIRETTA</span></div>
<div class="a inp" style="left:873px;top:772px;width:104px;padding-left:2.2px"><span class="w" style="width:41px;transform:scaleX(0.949)">Contanti</span></div>
<div class="a btn" style="left:977px;top:772px"><i class="arr"></i></div>
<div class="a t" style="left:315px;top:797px;line-height:20px;white-space:pre"><span class="w" style="width:6px;transform:scaleX(0.930)">3</span></div>
<div class="a inp" style="left:349px;top:796px;width:100px;padding-left:2.2px"></div>
<div class="a btn" style="left:449px;top:796px"><i class="arr"></i></div>
<div class="a inp " style="left:469px;top:796px;width:48px;text-align:right;padding-right:3.7px"><span class="w" style="width:22px;transform:scaleX(0.974)">0,00</span></div>
<div class="a inp" style="left:521px;top:796px;width:96px;padding-left:2.2px"><span class="w" style="width:30px;transform:scaleX(0.970)">Totale</span> <span class="w" style="width:22px;transform:scaleX(0.923)">Doc.</span></div>
<div class="a btn" style="left:617px;top:796px"><i class="arr"></i></div>
<div class="a inp " style="left:637px;top:796px;width:28px;text-align:right;padding-right:3.7px"><span class="w" style="width:6px;transform:scaleX(0.930)">0</span></div>
<div class="a inp " style="left:669px;top:796px;width:200px;text-align:left;padding-left:2px"></div>
<div class="a inp" style="left:873px;top:796px;width:104px;padding-left:2.2px"><span class="w" style="width:23px;transform:scaleX(0.915)">(Non</span> <span class="w" style="width:51px;transform:scaleX(0.942)">impostato)</span></div>
<div class="a btn" style="left:977px;top:796px"><i class="arr"></i></div>
<div class="a t" style="left:315px;top:821px;line-height:20px;white-space:pre"><span class="w" style="width:6px;transform:scaleX(0.930)">4</span></div>
<div class="a inp" style="left:349px;top:820px;width:100px;padding-left:2.2px"></div>
<div class="a btn" style="left:449px;top:820px"><i class="arr"></i></div>
<div class="a inp " style="left:469px;top:820px;width:48px;text-align:right;padding-right:3.7px"><span class="w" style="width:22px;transform:scaleX(0.974)">0,00</span></div>
<div class="a inp" style="left:521px;top:820px;width:96px;padding-left:2.2px"><span class="w" style="width:30px;transform:scaleX(0.970)">Totale</span> <span class="w" style="width:22px;transform:scaleX(0.923)">Doc.</span></div>
<div class="a btn" style="left:617px;top:820px"><i class="arr"></i></div>
<div class="a inp " style="left:637px;top:820px;width:28px;text-align:right;padding-right:3.7px"><span class="w" style="width:6px;transform:scaleX(0.930)">0</span></div>
<div class="a inp " style="left:669px;top:820px;width:200px;text-align:left;padding-left:2px"></div>
<div class="a inp" style="left:873px;top:820px;width:104px;padding-left:2.2px"><span class="w" style="width:23px;transform:scaleX(0.915)">(Non</span> <span class="w" style="width:51px;transform:scaleX(0.942)">impostato)</span></div>
<div class="a btn" style="left:977px;top:820px"><i class="arr"></i></div>
<div class="a t" style="left:315px;top:845px;line-height:20px;white-space:pre"><span class="w" style="width:6px;transform:scaleX(0.930)">5</span></div>
<div class="a inp" style="left:349px;top:844px;width:100px;padding-left:2.2px"></div>
<div class="a btn" style="left:449px;top:844px"><i class="arr"></i></div>
<div class="a inp " style="left:469px;top:844px;width:48px;text-align:right;padding-right:3.7px"><span class="w" style="width:22px;transform:scaleX(0.974)">0,00</span></div>
<div class="a inp" style="left:521px;top:844px;width:96px;padding-left:2.2px"><span class="w" style="width:30px;transform:scaleX(0.970)">Totale</span> <span class="w" style="width:22px;transform:scaleX(0.923)">Doc.</span></div>
<div class="a btn" style="left:617px;top:844px"><i class="arr"></i></div>
<div class="a inp " style="left:637px;top:844px;width:28px;text-align:right;padding-right:3.7px"><span class="w" style="width:6px;transform:scaleX(0.930)">0</span></div>
<div class="a inp " style="left:669px;top:844px;width:200px;text-align:left;padding-left:2px"></div>
<div class="a inp" style="left:873px;top:844px;width:104px;padding-left:2.2px"><span class="w" style="width:23px;transform:scaleX(0.915)">(Non</span> <span class="w" style="width:51px;transform:scaleX(0.942)">impostato)</span></div>
<div class="a btn" style="left:977px;top:844px"><i class="arr"></i></div>
<div class="a t" style="left:315px;top:869px;line-height:20px;white-space:pre"><span class="w" style="width:6px;transform:scaleX(0.930)">6</span></div>
<div class="a inp" style="left:349px;top:868px;width:100px;padding-left:2.2px"></div>
<div class="a btn" style="left:449px;top:868px"><i class="arr"></i></div>
<div class="a inp " style="left:469px;top:868px;width:48px;text-align:right;padding-right:3.7px"><span class="w" style="width:22px;transform:scaleX(0.974)">0,00</span></div>
<div class="a inp" style="left:521px;top:868px;width:96px;padding-left:2.2px"><span class="w" style="width:30px;transform:scaleX(0.970)">Totale</span> <span class="w" style="width:22px;transform:scaleX(0.923)">Doc.</span></div>
<div class="a btn" style="left:617px;top:868px"><i class="arr"></i></div>
<div class="a inp " style="left:637px;top:868px;width:28px;text-align:right;padding-right:3.7px"><span class="w" style="width:6px;transform:scaleX(0.930)">0</span></div>
<div class="a inp " style="left:669px;top:868px;width:200px;text-align:left;padding-left:2px"></div>
<div class="a inp" style="left:873px;top:868px;width:104px;padding-left:2.2px"><span class="w" style="width:23px;transform:scaleX(0.915)">(Non</span> <span class="w" style="width:51px;transform:scaleX(0.942)">impostato)</span></div>
<div class="a btn" style="left:977px;top:868px"><i class="arr"></i></div>
</body></html>
